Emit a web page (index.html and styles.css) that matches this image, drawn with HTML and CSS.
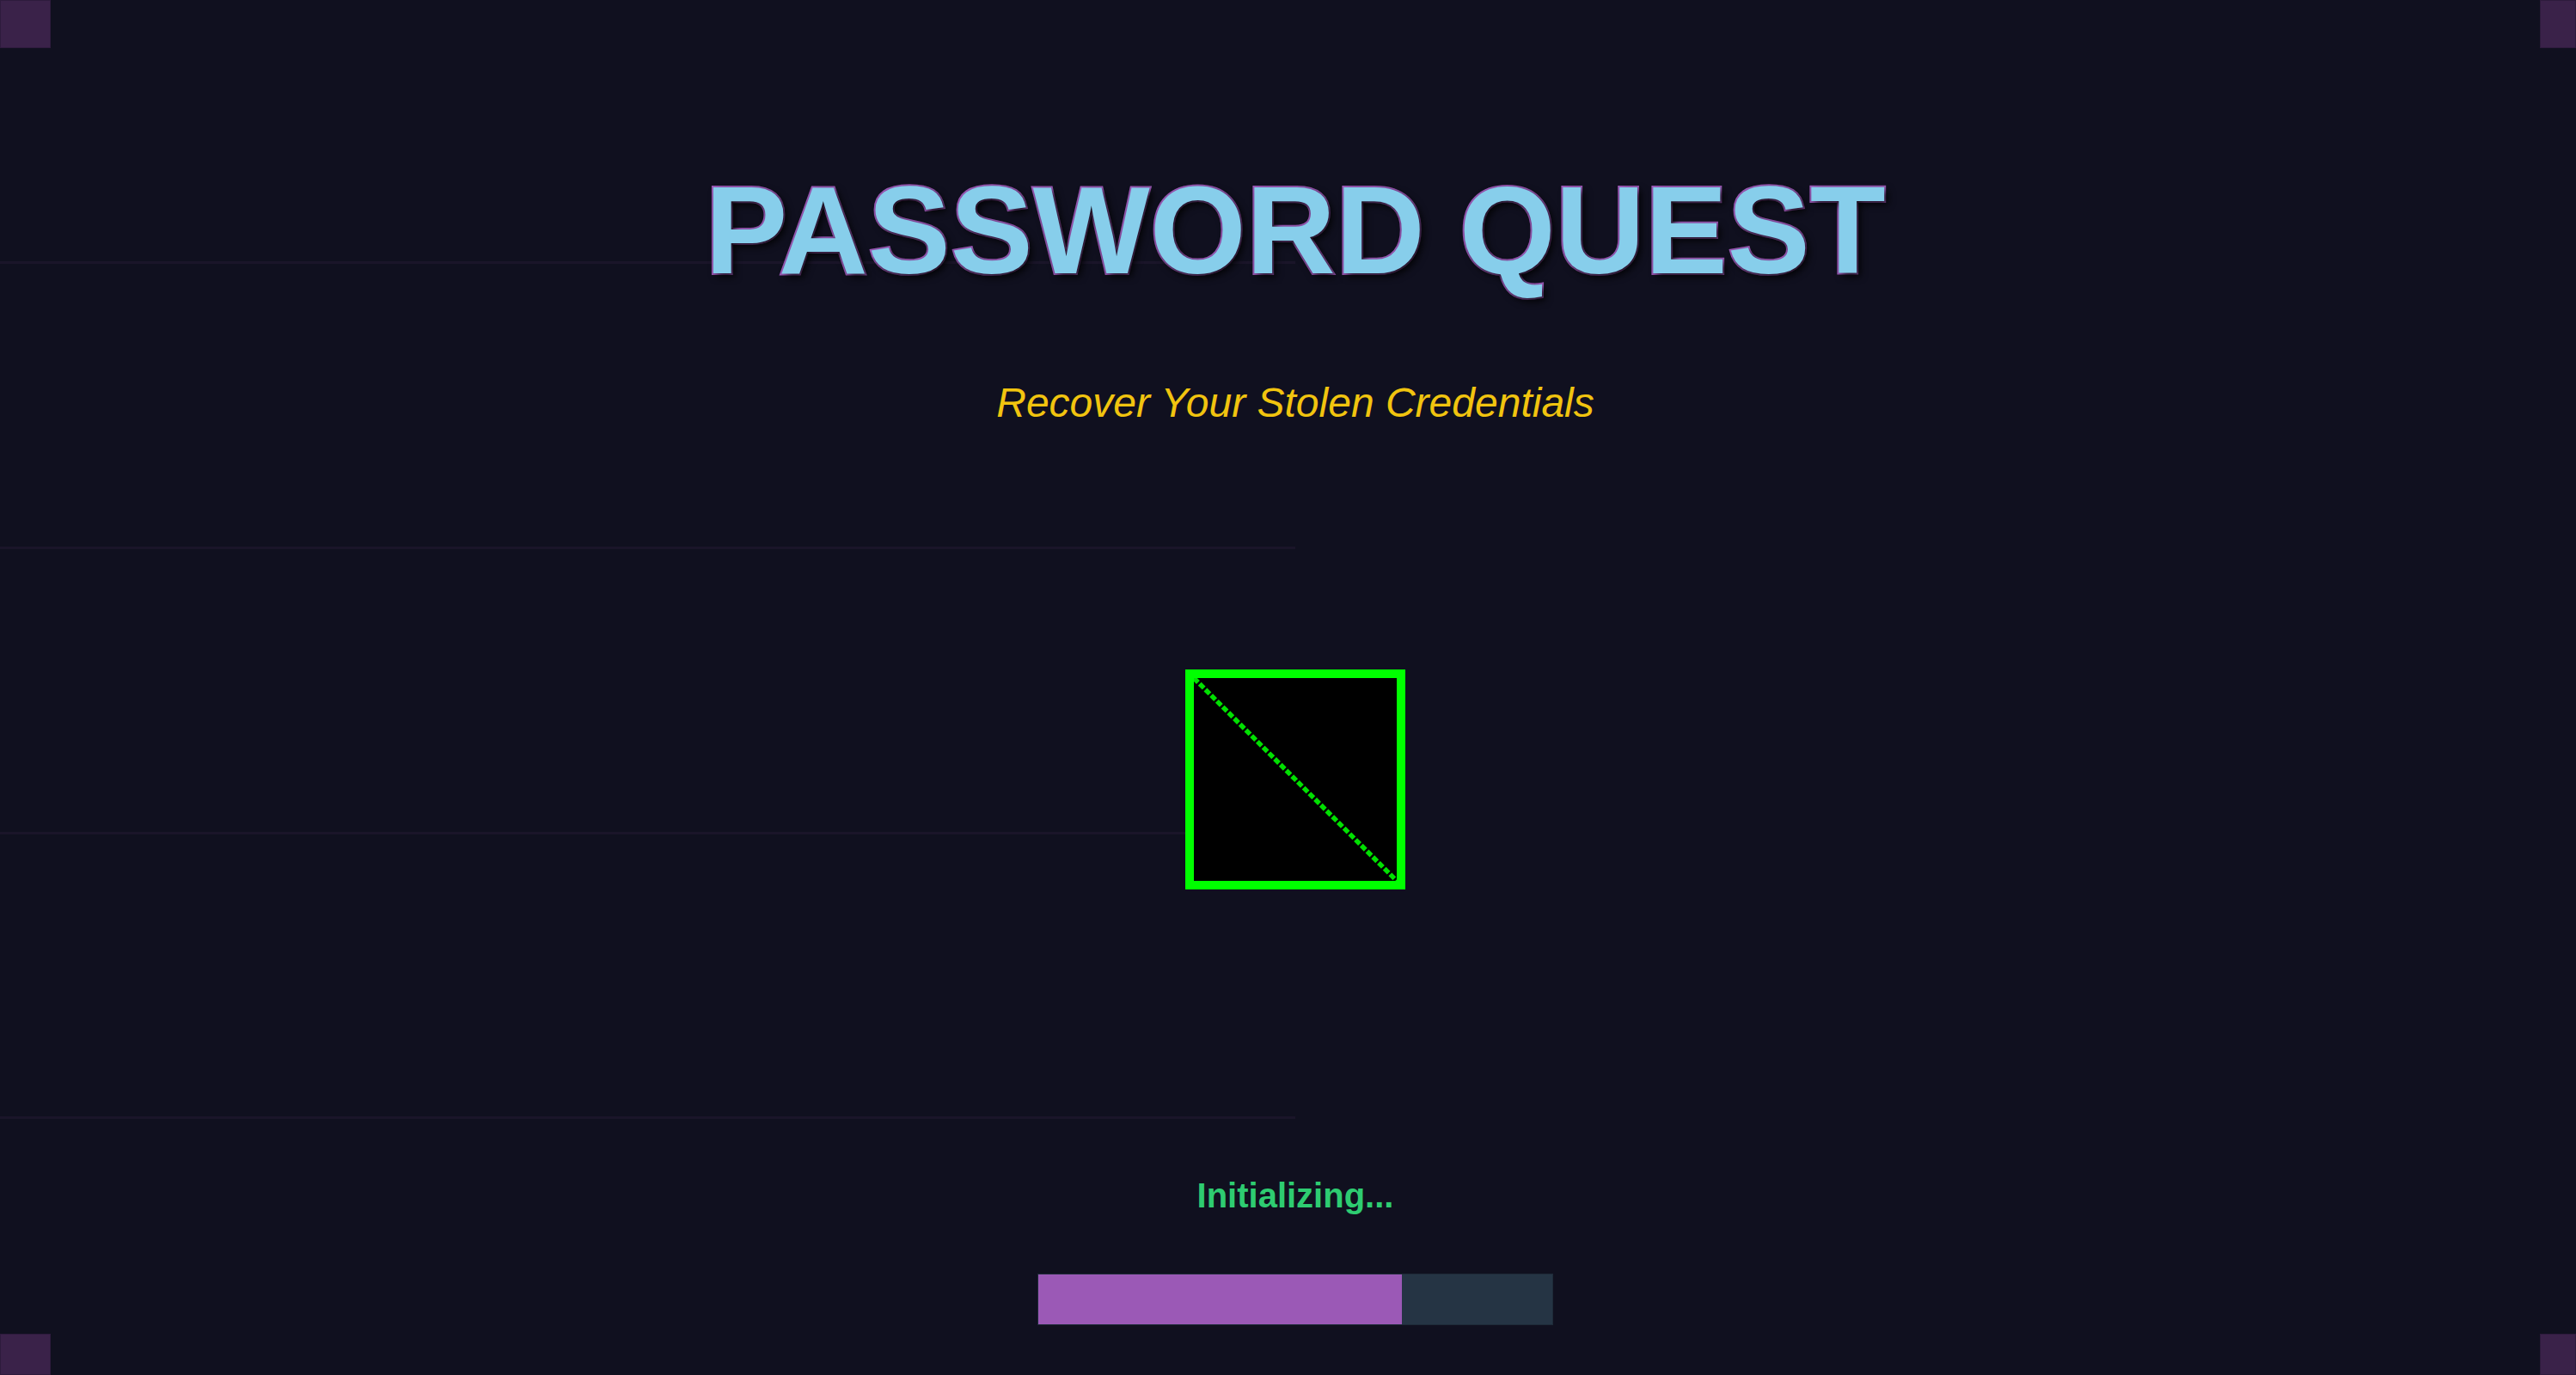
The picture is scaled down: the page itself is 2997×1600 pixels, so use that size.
FILE: index.html
```html
<!DOCTYPE html>
<html lang="en">
<head>
<meta charset="utf-8">
<title>Password Quest</title>
<link rel="stylesheet" href="styles.css">
</head>
<body>
<div class="scanlines">
  <div class="scan scan-1"></div>
  <div class="scan scan-2"></div>
  <div class="scan scan-3"></div>
  <div class="scan scan-4"></div>
</div>
<div class="corner corner-tl"></div>
<div class="corner corner-tr"></div>
<div class="corner corner-bl"></div>
<div class="corner corner-br"></div>
<main class="stage">
  <h1 class="title">PASSWORD QUEST</h1>
  <p class="subtitle">Recover Your Stolen Credentials</p>
  <div class="sprite">
    <svg class="sprite-svg" width="236" height="236" viewBox="0 0 236 236">
      <line x1="0" y1="0" x2="236" y2="236" class="diag"/>
    </svg>
  </div>
  <p class="status">Initializing...</p>
  <div class="progress"><div class="progress-fill" style="width:70.7%"></div></div>
</main>
</body>
</html>
```
FILE: styles.css
```css
html, body {
  margin: 0;
  padding: 0;
  width: 100%;
  height: 100%;
  overflow: hidden;
  background: #10101f;
}
body {
  font-family: "Liberation Sans", Arial, sans-serif;
  position: relative;
}
.stage {
  box-sizing: border-box;
  width: 100%;
  height: 100%;
  padding-left: 17px;
  padding-top: 197px;
  display: flex;
  flex-direction: column;
  align-items: center;
  position: relative;
  z-index: 1;
}
.title {
  margin: 0;
  font-size: 144px;
  line-height: 1;
  font-weight: 700;
  color: #87ceeb;
  -webkit-text-stroke: 4px #9b59b6;
  paint-order: stroke fill;
  text-shadow: 4px 4px 8px rgba(0, 0, 0, 0.85);
  white-space: nowrap;
}
.subtitle {
  margin: 104px 0 0 0;
  font-size: 48px;
  line-height: 1;
  font-style: italic;
  color: #f1c40f;
}
.sprite {
  margin-top: 286px;
  width: 236px;
  height: 236px;
  border: 10px solid #00ff00;
  background: #000;
}
.sprite-svg { display: block; }
.diag {
  stroke: #00e000;
  stroke-width: 5.5;
  stroke-dasharray: 7 2.5;
}
.status {
  margin: 336px 0 0 0;
  font-size: 40px;
  line-height: 1;
  font-weight: 700;
  color: #2ecc71;
}
.progress {
  margin-top: 71px;
  box-sizing: border-box;
  width: 600px;
  height: 60px;
  background: #253444;
  border: 1px solid #1e2a38;
  display: flex;
}
.progress-fill {
  height: 100%;
  background: #9b59b6;
}
.scanlines {
  position: absolute;
  inset: 0;
  z-index: 0;
}
.scan {
  position: absolute;
  left: 0;
  width: 1507px;
  height: 3px;
  background: #1a1529;
}
.scan-1 { top: 304px; }
.scan-2 { top: 636px; }
.scan-3 { top: 968px; }
.scan-4 { top: 1299px; }
.corner {
  position: absolute;
  background: #3a2249;
  box-shadow: inset 0 0 0 1px #2e1b3d;
  z-index: 2;
}
.corner-tl { top: 0; left: 0; width: 59px; height: 56px; }
.corner-tr { top: 0; right: 0; width: 42px; height: 56px; }
.corner-bl { bottom: 0; left: 0; width: 59px; height: 48px; }
.corner-br { bottom: 0; right: 0; width: 42px; height: 48px; }
```
